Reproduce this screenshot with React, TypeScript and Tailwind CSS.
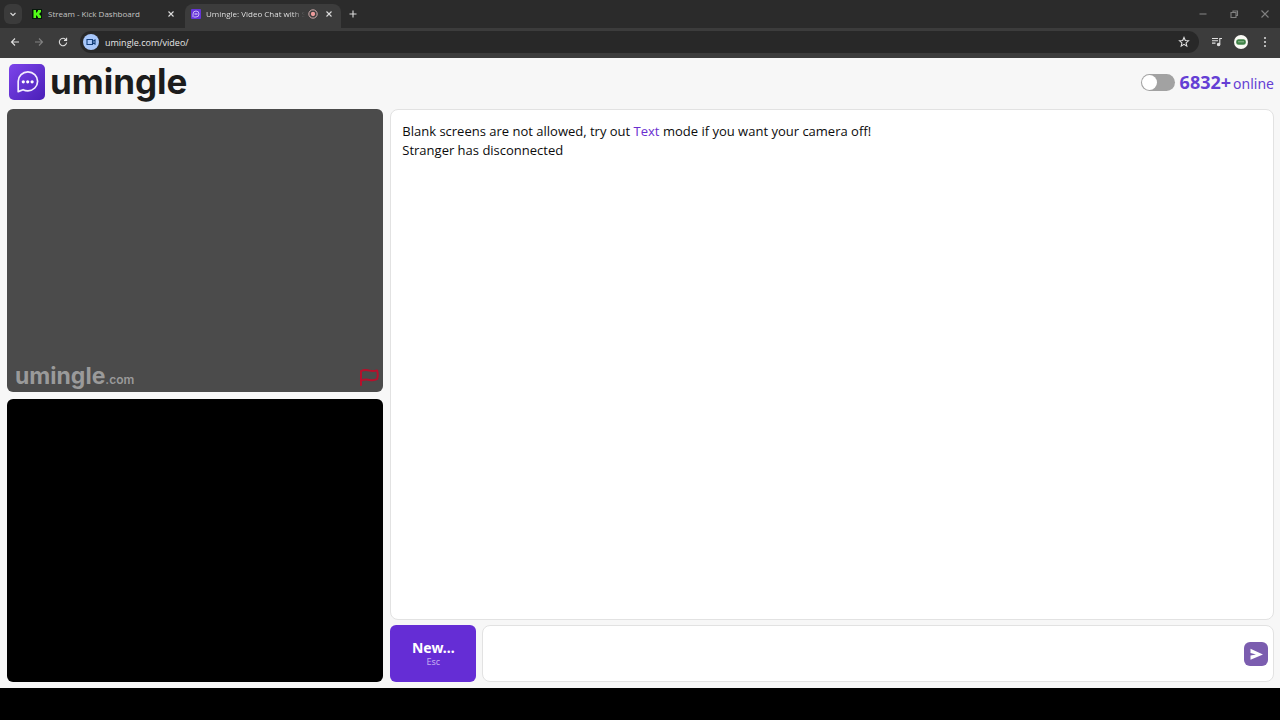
import { useState } from "react";
import type { ReactNode } from "react";

function Glyph({ children, className }: { children: ReactNode; className: string }) {
  return (
    <svg
      viewBox="0 0 12 12"
      className={className}
      fill="none"
      stroke="currentColor"
      strokeWidth="1.1"
      aria-hidden="true"
    >
      {children}
    </svg>
  );
}

function ChatMark({ className }: { className: string }) {
  return (
    <svg viewBox="0 0 36 36" className={className} aria-hidden="true">
      <defs>
        <linearGradient id="mark" x1="0" y1="0" x2="1" y2="1">
          <stop offset="0" stopColor="#7d45ea" />
          <stop offset="1" stopColor="#4a1fb8" />
        </linearGradient>
      </defs>
      <rect width="36" height="36" rx="5" fill="url(#mark)" />
      <path
        d="M9.200 27.600V17.300a9.700 9.500 0 1 1 9.700 9.500c-1.800 0-3.400-.4-4.800-1.100Z"
        fill="none"
        stroke="#f3edff"
        strokeWidth="1.700"
        strokeLinejoin="round"
      />
      <circle cx="14.300" cy="17.800" r="1.600" fill="#fff" />
      <circle cx="18.700" cy="17.800" r="1.600" fill="#fff" />
      <circle cx="23.100" cy="17.800" r="1.600" fill="#fff" />
    </svg>
  );
}

function TabMark() {
  return (
    <svg viewBox="0 0 10 10" className="size-[10px] shrink-0" aria-hidden="true">
      <rect width="10" height="10" rx="1" fill="#6534d8" />
      <path d="M2 8.200V5a3 3 0 1 1 3 3H2.800" fill="none" stroke="#e4d8ff" strokeWidth="0.8" />
      <path d="M3.500 5h3" stroke="#fff" strokeWidth="0.9" />
    </svg>
  );
}

function CloseGlyph() {
  return (
    <Glyph className="size-3">
      <path d="M3.500 3.500l5 5M8.500 3.500l-5 5" />
    </Glyph>
  );
}

function TabStrip() {
  return (
    <div className="flex h-7 items-center bg-[#2b2b2b] font-['Open_Sans',sans-serif] text-[8px] text-[#dcdcdc]">
      <button aria-label="Search tabs" className="ml-1 flex h-5 w-[18px] items-center justify-center rounded-md bg-[#3b3b3b]">
        <Glyph className="size-3">
          <path d="M3.500 5l2.500 2.500L8.500 5" />
        </Glyph>
      </button>
      <div className="ml-2 flex h-full w-[155px] items-center pr-2 pl-[2px]">
        <svg viewBox="0 0 10 10" className="size-[10px] shrink-0" aria-hidden="true">
          <rect width="10" height="10" fill="#06180a" />
          <path d="M1.500 1h2.500v2.500h1V2.500h1V1h3v2.500H8v1H7v1h1v1h1V9H6V7.500H5v-1H4V9H1.500Z" fill="#53fc18" />
        </svg>
        <span className="ml-[6px] flex-1 truncate text-[#c4c4c4]">Stream - Kick Dashboard</span>
        <button aria-label="Close Stream tab">
          <CloseGlyph />
        </button>
      </div>
      <div className="flex h-full items-end">
        <div className="flex h-6 w-[156px] items-center rounded-t-lg bg-[#3c3c3c] pr-[6px] pb-1 pl-[6px]">
          <TabMark />
          <span className="ml-[5px] w-[99px] shrink-0 overflow-hidden bg-linear-to-r from-[#eeeeee] from-88% to-[#3c3c3c] bg-clip-text whitespace-nowrap text-transparent">
            Umingle: Video Chat with S
          </span>
          <svg viewBox="0 0 12 12" className="ml-[3px] size-[10px] shrink-0" fill="none" aria-hidden="true">
            <circle cx="6" cy="6" r="5" stroke="#eec4c4" />
            <circle cx="6" cy="6" r="2.600" fill="#ef9c9c" />
          </svg>
          <button aria-label="Close Umingle tab" className="ml-auto">
            <CloseGlyph />
          </button>
        </div>
      </div>
      <button aria-label="New tab" className="ml-[6px]">
        <Glyph className="size-3">
          <path d="M6 2.500v7M2.500 6h7" />
        </Glyph>
      </button>
      <div className="mr-[9px] ml-auto flex gap-[19px] text-[#808080]">
        <button aria-label="Minimize">
          <Glyph className="size-3">
            <path d="M2.500 6h7" />
          </Glyph>
        </button>
        <button aria-label="Restore">
          <Glyph className="size-3">
            <path d="M3 4.500h5v5H3zM5 4.500V3h4.500v4.500H8" />
          </Glyph>
        </button>
        <button aria-label="Close window">
          <Glyph className="size-3">
            <path d="M2.500 2.500l7 7M9.500 2.500l-7 7" />
          </Glyph>
        </button>
      </div>
    </div>
  );
}

function Toolbar() {
  return (
    <div className="flex h-[30px] items-center bg-[#3c3c3c] px-[9px] pb-[2px] text-[#e0e0e0]">
      <button aria-label="Back">
        <Glyph className="size-3">
          <path d="M10 6H2.500M6 2.500L2.500 6 6 9.500" />
        </Glyph>
      </button>
      <button aria-label="Forward" className="ml-3 text-[#818181]">
        <Glyph className="size-3">
          <path d="M2 6h7.500M6 2.500L9.500 6 6 9.500" />
        </Glyph>
      </button>
      <button aria-label="Reload" className="ml-3">
        <Glyph className="size-3">
          <path d="M9 3.800A3.700 3.700 0 1 0 9.700 6.500M9.600 1.800v2.600H7" />
        </Glyph>
      </button>
      <div className="ml-[11px] flex h-[22px] flex-1 items-center rounded-full bg-[#282828] pr-[9px] pl-[3px]">
        <span className="flex size-4 items-center justify-center rounded-full bg-[#a8c7fa] text-[#123e79]">
          <Glyph className="size-3">
            <path d="M2 3.500h5.500v5H2zM7.500 5.500L10 4v4L7.500 6.500" />
          </Glyph>
        </span>
        <input
          aria-label="Address"
          defaultValue="umingle.com/video/"
          className="ml-[6px] h-5 min-w-0 flex-1 bg-transparent font-['Open_Sans',sans-serif] text-[9px] text-[#e6e6e6] outline-none"
        />
        <button aria-label="Bookmark this page">
          <Glyph className="size-3">
            <path d="M6 1.500l1.300 3 3.200.3-2.400 2.100.7 3.200L6 8.400l-2.800 1.700.7-3.200-2.400-2.100 3.200-.3z" />
          </Glyph>
        </button>
      </div>
      <button aria-label="Media controls" className="ml-3">
        <Glyph className="size-3">
          <path d="M1 2.500h6M1 4.800h6M1 7.100h3.500M8.800 8.500v-6H11" />
          <circle cx="7.600" cy="8.500" r="1.200" fill="currentColor" />
        </Glyph>
      </button>
      <button aria-label="Profile" className="ml-[11px]">
        <svg viewBox="0 0 14 14" className="size-[14px]" aria-hidden="true">
          <circle cx="7" cy="7" r="7" fill="#fafaf5" />
          <rect x="2.200" y="4.300" width="9.600" height="5.400" rx="2.500" fill="#3f8247" />
          <path d="M4 6.800h6" stroke="#94bd94" />
        </svg>
      </button>
      <button aria-label="Menu" className="ml-[11px]">
        <svg viewBox="0 0 12 12" className="size-3" fill="currentColor" aria-hidden="true">
          <circle cx="6" cy="2" r="1" />
          <circle cx="6" cy="6" r="1" />
          <circle cx="6" cy="10" r="1" />
        </svg>
      </button>
    </div>
  );
}

function Header() {
  const [on, setOn] = useState(false);
  return (
    <header className="flex h-[51px] items-center justify-between pr-[6px] pb-1 pl-[9px]">
      <a href="#home" className="flex items-center gap-[5px] font-[Inter,sans-serif] text-[35px] leading-none font-bold text-[#1c1c1c]">
        <ChatMark className="size-9" />
        <span>umingle</span>
      </a>
      <div className="flex items-center pt-[2px] text-[#653fd4]">
        <label className="flex cursor-pointer">
          <input
            type="checkbox"
            aria-label="Toggle mode"
            checked={on}
            onChange={(e) => setOn(e.target.checked)}
            className="h-[17px] w-[34px] appearance-none rounded-full bg-[#a2a2a2] p-px before:block before:size-[15px] before:rounded-full before:bg-white checked:bg-[#653fd4] checked:before:ml-auto"
          />
        </label>
        <p className="ml-[5px] flex items-baseline gap-[2px]">
          <strong className="text-[18px] leading-6 font-bold">6832+</strong>
          <span className="text-[14px] leading-6">online</span>
        </p>
      </div>
    </header>
  );
}

function Videos() {
  return (
    <div className="grid w-[29.7%] shrink-0 grid-rows-2 gap-[7px]">
      <section aria-label="Stranger's video" className="flex items-end justify-between rounded-md bg-[#4b4b4b] pr-1 pb-1 pl-2">
        <p className="flex items-baseline font-[Inter,sans-serif] font-bold text-[#9a9a9a]">
          <span className="text-[23px] leading-4">umingle</span>
          <span className="text-[12px] leading-4 font-semibold">.com</span>
        </p>
        <button aria-label="Report">
          <svg viewBox="0 0 20 20" className="size-5" fill="none" stroke="#b80f2b" strokeWidth="2" strokeLinecap="round" strokeLinejoin="round" aria-hidden="true">
            <path d="M2 17V3.200C5 1.600 7.500 1.800 10.500 2.600s5 .6 7.500-.2c1 2.800 1 5.800 0 8.800-2.500 1.300-5 1.200-7.500.7S5 11.500 2 12.600" />
          </svg>
        </button>
      </section>
      <section aria-label="Your video" className="rounded-md bg-black" />
    </div>
  );
}

function Chat() {
  return (
    <div className="flex min-w-0 flex-1 flex-col gap-[5px]">
      <section aria-label="Messages" className="flex-1 rounded-lg border border-[#e2e2e2] bg-white px-[11px] py-3 font-['Open_Sans',sans-serif] text-[13px] leading-[19px] font-medium text-[#0c0c0c]">
        <p>
          Blank screens are not allowed, try out{" "}
          <a href="#text" className="text-[#6a2fcf]">
            Text
          </a>{" "}
          mode if you want your camera off!
        </p>
        <p>Stranger has disconnected</p>
      </section>
      <form className="flex h-[57px] gap-[6px]" onSubmit={(e) => e.preventDefault()}>
        <button type="button" className="flex w-[86px] shrink-0 flex-col items-center justify-center rounded-md bg-[#652dd5] text-white">
          <span className="text-[14px] leading-4 font-bold">New...</span>
          <span className="text-[9px] leading-3 text-[#c4acf2]">Esc</span>
        </button>
        <div className="flex flex-1 items-center rounded-lg border border-[#e2e2e2] bg-white pr-[5px]">
          <input aria-label="Message" className="h-full min-w-0 flex-1 bg-transparent px-3 text-[13px] outline-none" />
          <button aria-label="Send" className="flex size-6 items-center justify-center rounded-md bg-[#7b5daf]">
            <svg viewBox="0 0 24 24" className="size-6" fill="#fff" aria-hidden="true">
              <path d="M6.500 6.800L19 12.400 6.500 17.800V13.600l5.500-1.200-5.500-1.300Z" />
            </svg>
          </button>
        </div>
      </form>
    </div>
  );
}

export default function App() {
  return (
    <div className="flex min-h-screen flex-col bg-black font-['Noto_Sans',sans-serif]">
      <TabStrip />
      <Toolbar />
      <div className="flex flex-1 flex-col bg-[#f7f7f7]">
        <Header />
        <main className="flex flex-1 gap-[7px] pr-[6px] pb-[6px] pl-[7px]">
          <Videos />
          <Chat />
        </main>
      </div>
      <footer className="h-8 bg-black" />
    </div>
  );
}
